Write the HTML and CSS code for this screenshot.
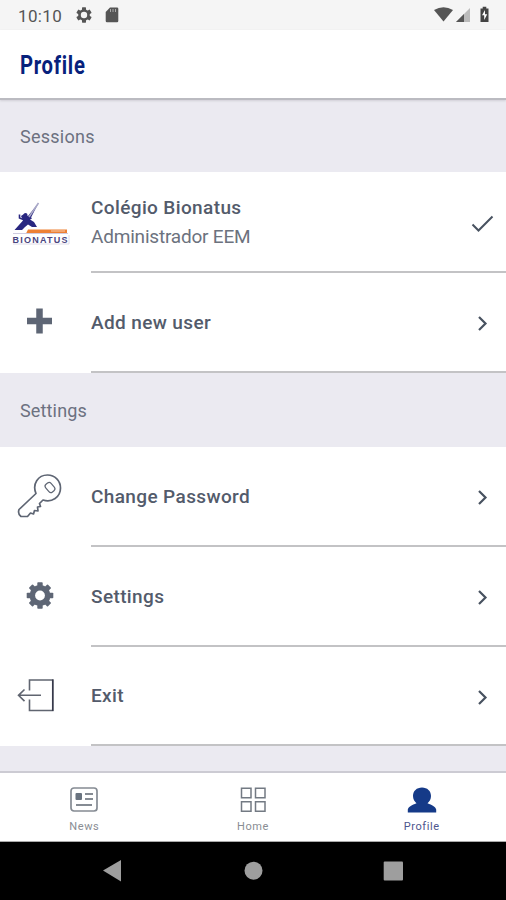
FILE: index.html
```html
<!DOCTYPE html>
<html lang="en">
<head>
<meta charset="utf-8">
<title>Profile</title>
<link rel="stylesheet" href="styles.css">
</head>
<body>
<div class="status">
  <span class="clock">10:10</span>
  <svg class="gear-small" width="18" height="18" viewBox="-9 -9 18 18"><g fill="#555"><circle r="5.8"/><g id="tooth"><rect x="-2" y="-7.700" width="4" height="15.400" rx=".6"/></g><use href="#tooth" transform="rotate(60)"/><use href="#tooth" transform="rotate(120)"/></g><circle r="3.200" fill="#f5f5f5"/></svg>
  <svg class="card" width="14" height="16" viewBox="0 0 14 16"><path d="M5 .5h7q1.300 0 1.300 1.300v12q0 1.500-1.300 1.500H2Q.7 15.300.7 13.800V5z" fill="#555"/><path d="M5.500 2v3M8 2v3M10.500 2v3" stroke="#aaa" stroke-width="1"/></svg>
  <svg class="signals" width="60" height="20" viewBox="0 0 60 20"><path d="M0 5Q9.500-.5 19 5L9.500 16.500z" fill="#555"/><path d="M36 3v14H22z" fill="#bbb"/><path d="M30 9v8h-8z" fill="#555"/><path d="M46.500 3.500h2.200v-1.700h3.600v1.700h2.200v13.500h-8z" fill="#444"/><path d="M51 5l-3 5.200h2.200V15l3-5.800H51z" fill="#fff"/></svg>
</div>
<header class="header"><h1>Profile</h1></header>
<main class="content">
  <h2 class="section sessions">Sessions</h2>
  <div class="row account">
    <svg class="icon" width="91" height="101" viewBox="0 0 91 101">
      <path d="M38.500 31L30 47.500l4 2.500 3 5h-5l-4-2.500-3 2.500-3 3h-7.500l8.500-9.500-2-4.500 3-2 4 2z" fill="#292780"/>
      <path d="M38.500 31L29 45" stroke="#aaa9c8" stroke-width="1.600"/><circle cx="25.500" cy="43" r="2" fill="#292780"/><path d="M19.500 42.500v3.500l6 2.500 6-2.500" fill="none" stroke="#292780" stroke-width="1.600"/>
      <path d="M28 57.500h39v4H26z" fill="#ed8135"/><path d="M51 59h14" stroke="#f6c099" stroke-width="1.200"/><path d="M13 61.500h55" stroke="#cfcce0" stroke-width="1"/>
      <text class="logo-text" x="12.500" y="70.500" textLength="55">BIONATUS</text><path d="M13 72h56V63" fill="none" stroke="#dedbe8"/>
    </svg>
    <div class="label"><div class="names"><div class="name">Colégio Bionatus</div><div class="role">Administrador EEM</div></div>
      <svg class="action" width="48" height="100" viewBox="0 0 48 100"><path d="M14.500 52.500l6 6L34.500 44.500" fill="none" stroke="#485260" stroke-width="2"/></svg></div>
  </div>
  <div class="row">
    <svg class="icon" width="91" height="100" viewBox="0 0 91 100"><path d="M39.500 35.500v25M27 48h25" stroke="#5e6675" stroke-width="6.500"/></svg>
    <div class="label"><span class="add">Add new user</span><svg class="action" width="48" height="100" viewBox="0 0 48 100"><path d="M21 45l6.500 6.500-6.500 6.500" fill="none" stroke="#485260" stroke-width="2.200"/></svg></div>
  </div>
  <h2 class="section settings">Settings</h2>
  <div class="row">
    <svg class="icon" width="91" height="100" viewBox="0 0 91 100"><g fill="none" stroke="#5e6573" stroke-width="1.700" stroke-linejoin="round"><path d="M36 46.500C32 37 38 28 47.500 28C55 28 60.500 34 60.500 41C60.500 50 52 56 43 53L39.500 56.500 40.500 59.500 37.500 60 38 64 34.500 63.500 33.500 67 30.500 66 27.500 69.500H21Q17.500 67 19 62.500Z"/><rect x="45" y="37" width="10" height="7" rx="2.500" transform="rotate(50 50 40.500)" stroke-width="1.200"/></g></svg>
    <div class="label"><span class="password">Change Password</span><svg class="action" width="48" height="100" viewBox="0 0 48 100"><path d="M21 45l6.500 6.500-6.500 6.500" fill="none" stroke="#485260" stroke-width="2.200"/></svg></div>
  </div>
  <div class="row">
    <svg class="icon" width="91" height="100" viewBox="0 0 91 100"><g transform="translate(40 48.500)" fill="#5e6675"><circle r="10.500"/><g id="cog"><rect x="-2.700" y="-13.300" width="5.400" height="26.600" rx=".8"/></g><use href="#cog" transform="rotate(45)"/><use href="#cog" transform="rotate(90)"/><use href="#cog" transform="rotate(135)"/><circle r="4.900" fill="#fff"/></g></svg>
    <div class="label"><span class="prefs">Settings</span><svg class="action" width="48" height="100" viewBox="0 0 48 100"><path d="M21 45l6.500 6.500-6.500 6.500" fill="none" stroke="#485260" stroke-width="2.200"/></svg></div>
  </div>
  <div class="row last">
    <svg class="icon" width="91" height="99" viewBox="0 0 91 99"><path d="M29.500 43.500V33h23.300v30.500H29.500V52.500M19 48.300h22M24.500 42.500l-6 5.800 6 5.800" fill="none" stroke="#606570" stroke-width="1.600"/><path d="M52.700 32.500v31.500" stroke="#37394b" stroke-width="1.500"/></svg>
    <div class="label"><span class="exit">Exit</span><svg class="action" width="48" height="100" viewBox="0 0 48 100"><path d="M21 45l6.500 6.500-6.500 6.500" fill="none" stroke="#485260" stroke-width="2.200"/></svg></div>
  </div>
</main>
<nav class="tabs">
  <div class="tab"><svg width="30" height="28" viewBox="0 0 30 28"><rect x="2" y="2" width="26" height="23" rx="3" fill="none" stroke="#858b93" stroke-width="1.700"/><rect x="6.500" y="7" width="6.500" height="7" rx="1" fill="#69737f"/><path d="M16 8h8M16 13h8M7 19h16" stroke="#858b93" stroke-width="2"/></svg><span class="news">News</span></div>
  <div class="tab"><svg width="30" height="28" viewBox="0 0 30 28"><path d="M3.500 2.200h9.500v9.500H3.500zM17.500 2.200H27v9.500h-9.500zM3.500 15.800h9.500v9.500H3.500zM17.500 15.800H27v9.500h-9.500z" fill="none" stroke="#737a83" stroke-width="1.500"/></svg><span class="home">Home</span></div>
  <div class="tab active"><svg width="30" height="28" viewBox="0 0 30 28"><path d="M15 1.500c5.300 0 9 3.500 9 8.500 0 3.500-1.500 5.500-3.500 7.200 4.500 1.700 8 3.300 8.700 6.300v3H.8v-3c.7-3 4.200-4.600 8.700-6.300-2-1.700-3.500-3.700-3.500-7.200 0-5 3.700-8.500 9-8.500z" fill="#153a88"/></svg><span class="me">Profile</span></div>
</nav>
<div class="system"><svg width="506" height="58" viewBox="0 0 506 58" fill="#9e9e9e"><path d="M103 28.500l18-10.500v21.500z"/><circle cx="253.500" cy="28.700" r="9"/><rect x="383.700" y="19.500" width="19.300" height="19" rx="1"/></svg></div>
</body>
</html>
```
FILE: styles.css
```css
* { box-sizing: border-box; }
body { margin: 0; width: 506px; height: 900px; display: flex; flex-direction: column; overflow: hidden; background: #ebeaf1; font-family: Roboto, sans-serif; color: #535b6b; }
svg { display: block; flex: none; }
.status { height: 30px; flex: none; display: flex; align-items: center; background: #f5f5f5; padding-left: 18px; }
.clock { font-size: 17px; color: #555; width: 57px; letter-spacing: .35px; padding-top: 2px; }
.card { margin-left: 12px; }
.signals { margin-left: auto; margin-right: 12px; }
.header { height: 70px; flex: none; padding: 0 20px; display: flex; align-items: center; background: #fff; border-bottom: 2px solid #bbbbc1; z-index: 1; box-shadow: 0 1px 2px #d0cfd6; }
h1 { margin: 4px 0 0; font-size: 25px; line-height: 30px; font-weight: 700; color: #07217c; letter-spacing: .9px; transform: scaleX(.81); transform-origin: left; }
.section { margin: 0; padding: 0 20px; display: flex; align-items: center; font-weight: 400; font-size: 18px; color: #6c7180; }
.sessions { height: 72px; letter-spacing: .25px; }
.settings { height: 74px; letter-spacing: .15px; }
.row { height: 100px; display: flex; background: #fff; }
.account { height: 101px; }
.last { height: 99px; }
.label { flex: 1; display: flex; align-items: center; justify-content: space-between; border-bottom: 2px solid #c3c3c5; font-size: 19px; font-weight: 500; letter-spacing: .38px; overflow: hidden; }
.name { line-height: 29px; }
.role { line-height: 29px; font-weight: 400; letter-spacing: -.2px; color: #6c727e; }
.logo-text { font-family: "Liberation Sans", sans-serif; font-size: 9px; font-weight: 700; fill: #49457f; }
.tabs { height: 71px; flex: none; margin-top: auto; display: flex; background: #fff; border-top: 2px solid #cccbd3; border-bottom: 1px solid #aaa; }
.tab { flex: 1; display: flex; flex-direction: column; align-items: center; padding-top: 13px; font-size: 11px; line-height: 14px; letter-spacing: .6px; color: #898d93; gap: 6px; }
.active { color: #4d568d; }
.system { height: 58px; flex: none; background: #000; }
```
